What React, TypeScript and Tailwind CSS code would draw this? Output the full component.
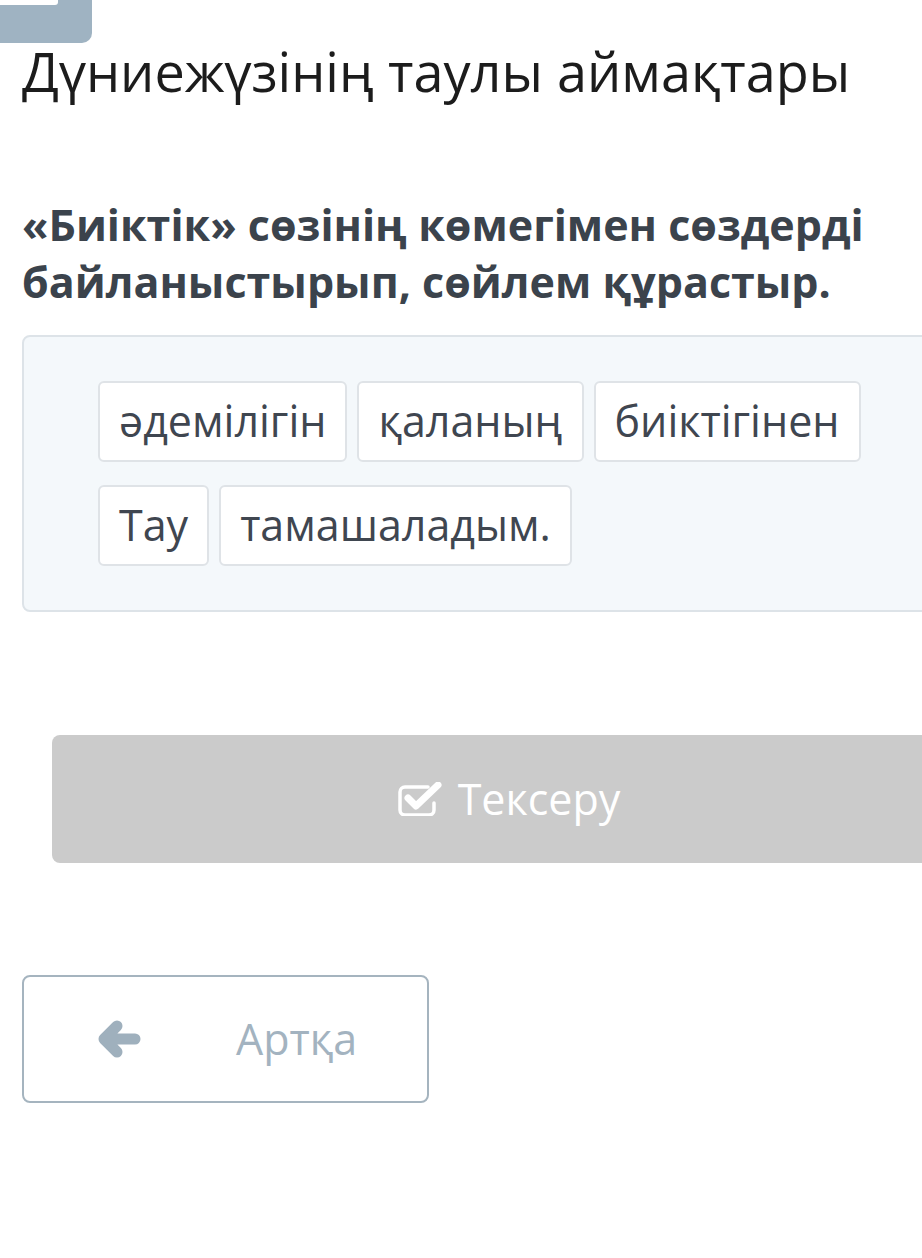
const words = [['әдемілігін', 'қаланың', 'биіктігінен'], ['Тау', 'тамашаладым.']]

function CheckSquareIcon() {
  return (
    <svg width="46" height="34" viewBox="0 0 46 34" fill="none">
      {/* square outline with a gap where the tick breaks out */}
      <path
        d="M30 5 H7 a5 5 0 0 0 -5 5 v18 a5 5 0 0 0 5 5 h24 a5 5 0 0 0 5 -5 v-7"
        stroke="white"
        strokeWidth="3.5"
        strokeLinecap="round"
        fill="none"
      />
      <path d="M10 16 L18 24 L40 3" stroke="white" strokeWidth="7" strokeLinecap="round" strokeLinejoin="round" fill="none" />
    </svg>
  )
}

function ArrowLeftIcon() {
  return (
    <svg width="44" height="38" viewBox="0 0 44 38" fill="none">
      <path
        d="M38 19 H8 M20 6 L7 19 L20 32"
        stroke="#9fb0bd"
        strokeWidth="11"
        strokeLinecap="round"
        strokeLinejoin="round"
      />
    </svg>
  )
}

export default function App() {
  return (
    <div className="relative w-[922px] h-[1258px] overflow-hidden bg-white font-['Open_Sans',sans-serif]">
      {/* top tab, cut off by the screen edge */}
      <div className="w-[92px] h-[43px] bg-[#9fb3c2] rounded-br-[10px]">
        <div className="w-[58px] h-[5px] bg-white rounded-br-[3px]" />
      </div>

      <h1 className="pl-[22px] text-[54px] leading-[56px] font-normal text-[#1c1c1c] whitespace-nowrap">
        Дүниежүзінің таулы аймақтары
      </h1>

      <h2 className="mt-[97px] pl-[22px] pr-[30px] text-[43px] leading-[57px] font-bold text-[#3b434c]">
        «Биіктік» сөзінің көмегімен сөздерді байланыстырып, сөйлем құрастыр.
      </h2>

      {/* word bank */}
      <div className="mt-[25px] ml-[22px] w-[944px] border-2 border-[#dde3e8] bg-[#f4f8fb] rounded-[8px] pt-[44px] pb-[44px] pl-[74px] flex flex-col gap-[23px]">
        {words.map((row, i) => (
          <div key={i} className="flex gap-[10px]">
            {row.map((w) => (
              <div
                key={w}
                className="h-[81px] flex items-center px-[19px] bg-white border-2 border-[#dfe3e7] rounded-[6px] text-[43px] text-[#3f4650] whitespace-nowrap"
              >
                {w}
              </div>
            ))}
          </div>
        ))}
      </div>

      {/* check button (disabled) */}
      <div className="mt-[123px] ml-[52px] w-[914px] h-[128px] bg-[#cbcbcb] rounded-[8px] flex items-center justify-center gap-[14px] text-white text-[43px]">
        <CheckSquareIcon />
        <span>Тексеру</span>
      </div>

      {/* back button */}
      <div className="mt-[112px] ml-[22px] w-[407px] h-[128px] border-2 border-[#a5b4bf] rounded-[8px] flex items-center pl-[73px] text-[#a3b3c0]">
        <ArrowLeftIcon />
        <span className="ml-[95px] text-[43px]">Артқа</span>
      </div>
    </div>
  )
}
